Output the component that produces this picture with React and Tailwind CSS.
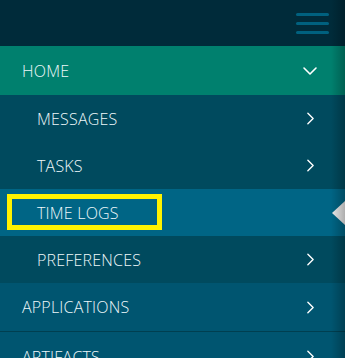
import { ChevronDown, ChevronRight } from "lucide-react";

const subItems = [
  { label: "MESSAGES" },
  { label: "TASKS" },
  { label: "TIME LOGS", active: true },
  { label: "PREFERENCES" },
];

const Row = ({ label, className, indent, icon }) => (
  <div
    className={`flex items-center justify-between pr-[23px] ${indent ? "pl-[37px]" : "pl-[22px]"} ${className}`}
  >
    <span className="text-[16px] font-light text-[#eef8fa] tracking-[0.2px]">{label}</span>
    <span className="w-[24px] flex justify-center">{icon}</span>
  </div>
);

const Next = () => <ChevronRight size={21} strokeWidth={1.6} className="text-white" />;

export default function App() {
  return (
    <div
      className="relative w-[345px] h-[358px] overflow-hidden bg-[#004a5e]"
      style={{ fontFamily: '"Open Sans", "Noto Sans", sans-serif' }}
    >
      {/* top bar */}
      <div className="h-[46px] bg-[#002b3a] flex items-center justify-end pr-[16px]">
        <div className="flex flex-col gap-[6px]">
          <span className="block w-[33px] h-[3px] rounded-full bg-[#00617f]" />
          <span className="block w-[33px] h-[3px] rounded-full bg-[#00617f]" />
          <span className="block w-[33px] h-[3px] rounded-full bg-[#00617f]" />
        </div>
      </div>

      <Row
        label="HOME"
        className="h-[49px] bg-[#00806e]"
        icon={<ChevronDown size={24} strokeWidth={1.6} className="text-white" />}
      />

      {subItems.map((item) => (
        <div key={item.label} className="relative">
          <Row
            label={item.label}
            indent
            className={`h-[47px] ${item.active ? "bg-[#006585]" : "bg-[#004a5e]"}`}
            icon={item.active ? null : <Next />}
          />
          {item.active && (
            <>
              <div className="absolute left-[7px] top-[5px] w-[155px] h-[36px] border-[5px] border-[#fff200]" />
              <div className="absolute right-0 top-[12px] w-0 h-0 border-y-[12px] border-y-transparent border-r-[13px] border-r-[#e8e8e8]" />
            </>
          )}
        </div>
      ))}

      <Row
        label="APPLICATIONS"
        className="h-[49px] bg-[#005570] border-b border-[#003f50]"
        icon={<Next />}
      />
      <Row label="ARTIFACTS" className="h-[49px] bg-[#005570]" icon={<Next />} />

      {/* right edge shade */}
      <div className="pointer-events-none absolute top-0 right-0 h-full w-[14px] bg-gradient-to-l from-black/25 to-transparent" />
    </div>
  );
}
